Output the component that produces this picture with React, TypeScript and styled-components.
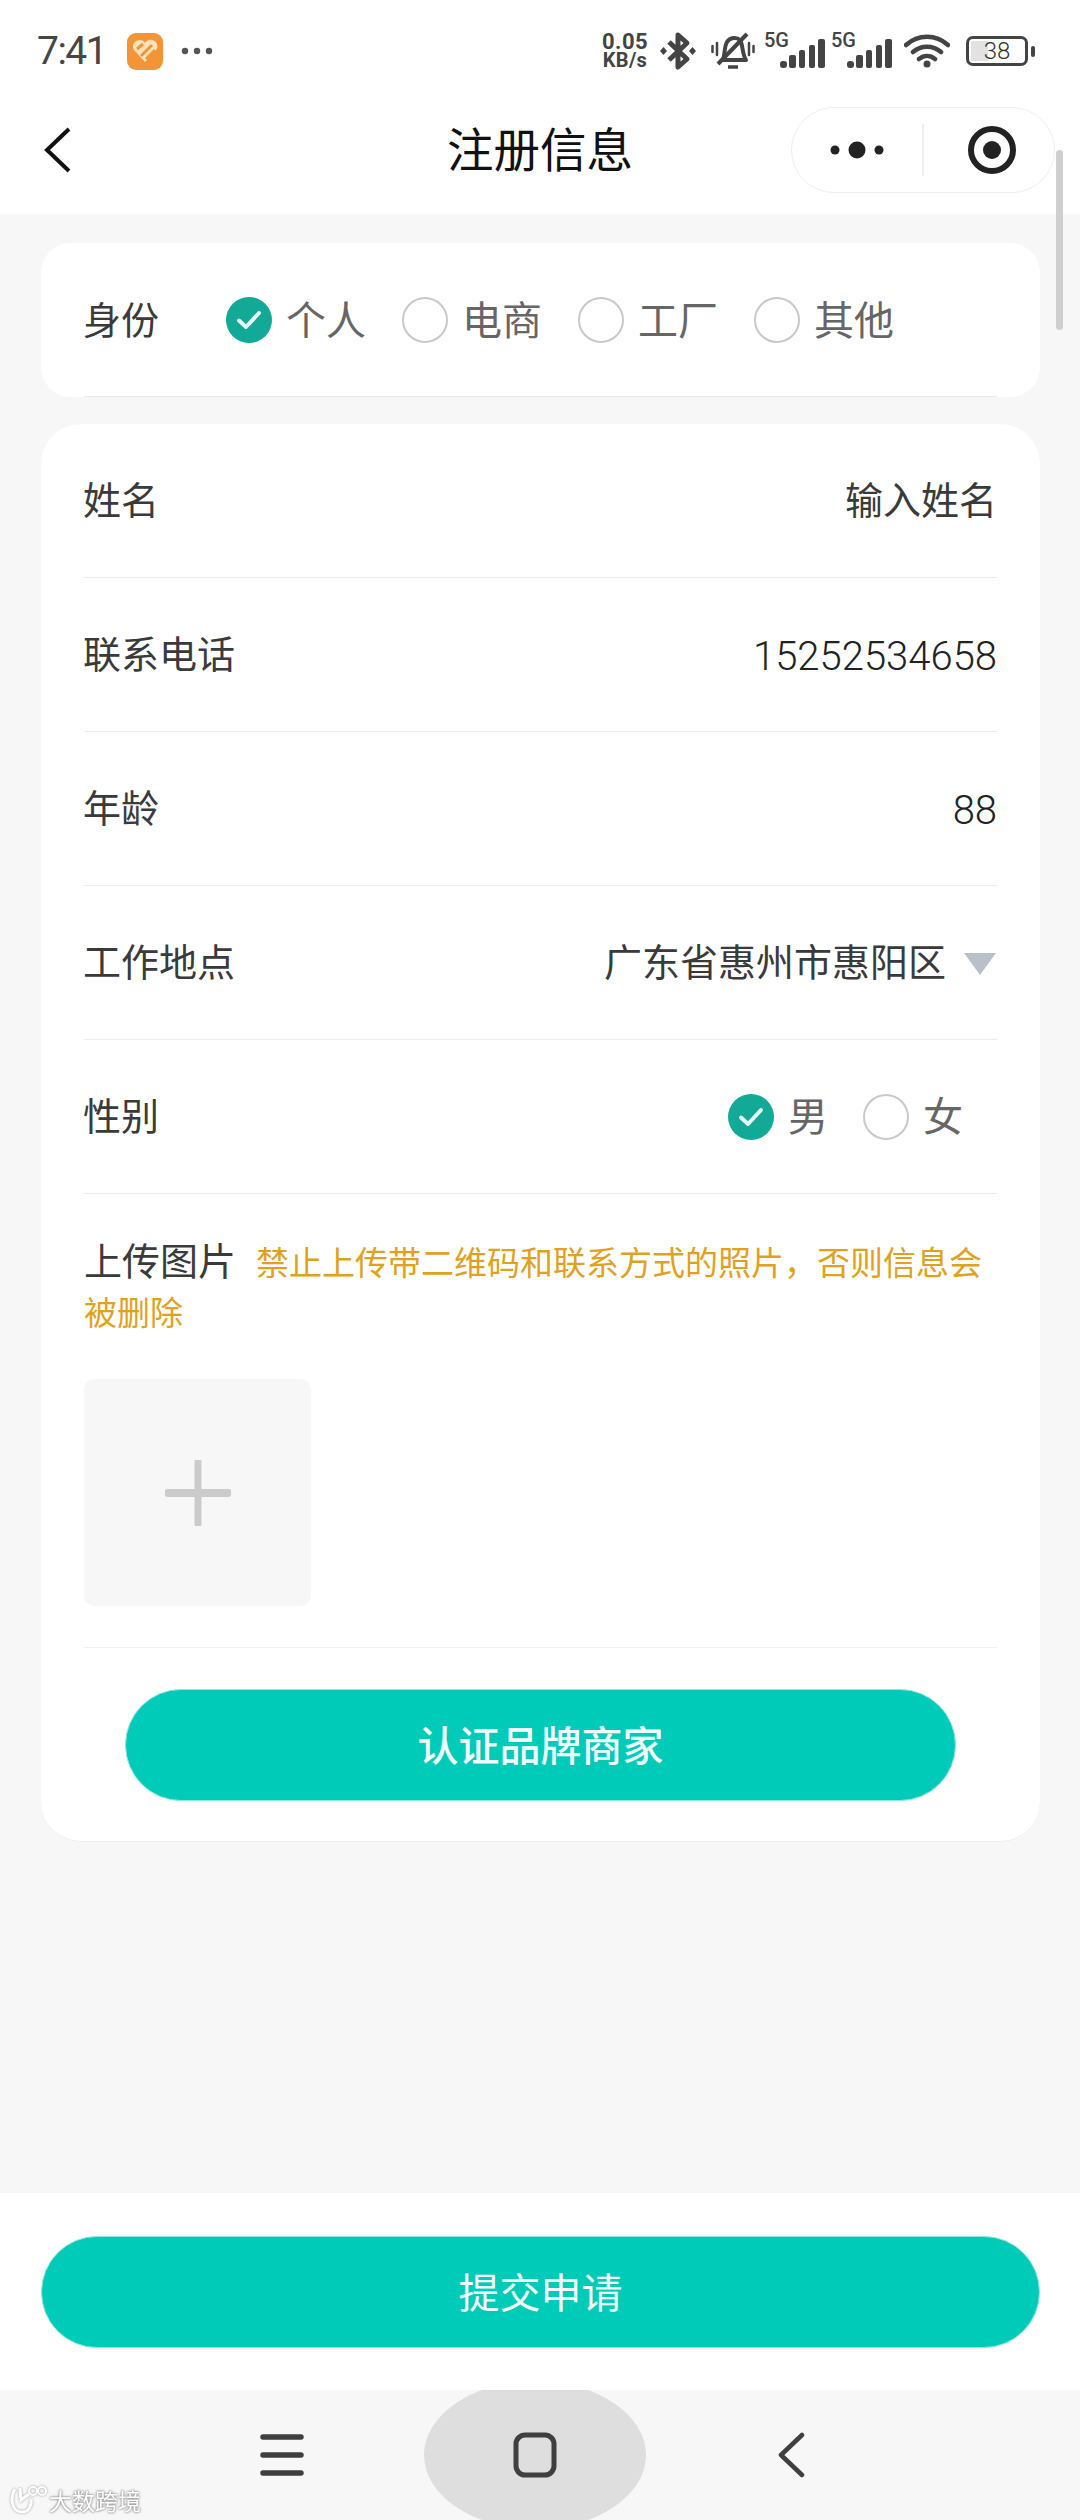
import styled, { createGlobalStyle } from "styled-components";

const GlobalStyle = createGlobalStyle`
    html, body {
        margin: 0;
        padding: 0;
        background: #f7f7f7;
    }
    * {
        box-sizing: border-box;
    }
`

const identities = [
    { label: "个人", checked: true },
    { label: "电商", checked: false },
    { label: "工厂", checked: false },
    { label: "其他", checked: false },
];

const RadioOption = ({ label, checked }: { label: string; checked: boolean }) => (
    <Option>
        <RadioCircle $checked={checked}>
            {checked && (
                <svg width="28" height="22" viewBox="0 0 28 22">
                    <path d="M4 11.5 L11 18 L24 4" fill="none" stroke="#e6fbf8" strokeWidth="4" strokeLinecap="round" strokeLinejoin="round" />
                </svg>
            )}
        </RadioCircle>
        <OptionText>{label}</OptionText>
    </Option>
);

const Signal = () => (
    <SignalWrap>
        <SignalLabel>5G</SignalLabel>
        <svg width="45" height="29" viewBox="0 0 45 29">
            <rect x="0" y="22" width="7" height="7" rx="3" fill="#444" />
            <rect x="9" y="16" width="7" height="13" rx="2" fill="#444" />
            <rect x="19" y="11" width="6" height="18" rx="2" fill="#444" />
            <rect x="29" y="6" width="6" height="23" rx="2" fill="#444" />
            <rect x="38" y="0" width="7" height="29" rx="2" fill="#444" />
        </svg>
    </SignalWrap>
);

const App = () => {
    return (
        <>
            <GlobalStyle />
            <Screen>
                <ScrollThumb />
                <StatusBar>
                    <StatusLeft>
                        <Time>7:41</Time>
                        <AppIcon>
                            <svg width="26" height="24" viewBox="0 0 26 24">
                                <path d="M13 23 L2 11 C-1 6 3 1 8 1 C10 1 12 2 13 4 C15 1 18 0 20 1 C25 2 27 7 24 11 Z" fill="#fde3bd" />
                                <path d="M5 10 L11 5 M9 17 L20 6 M14 20 L23 11" stroke="#f39536" strokeWidth="3" fill="none" />
                            </svg>
                        </AppIcon>
                        <MoreDots width="32" height="8" viewBox="0 0 32 8">
                            <circle cx="4" cy="4" r="3.2" fill="#555" />
                            <circle cx="16" cy="4" r="3.2" fill="#555" />
                            <circle cx="28" cy="4" r="3.2" fill="#555" />
                        </MoreDots>
                    </StatusLeft>
                    <StatusRight>
                        <Speed>
                            <span>0.05</span>
                            <span>KB/s</span>
                        </Speed>
                        <StatusItem $left={12}>
                            <svg width="36" height="40" viewBox="0 0 36 40">
                                <path d="M9 11 L27 28 L18 36 L18 4 L27 12 L9 29" fill="none" stroke="#444" strokeWidth="5" strokeLinejoin="round" />
                                <path d="M3.5 16 L7 20 L3.5 24 L0 20 Z M32.5 16 L36 20 L32.5 24 L29 20 Z" fill="#444" />
                            </svg>
                        </StatusItem>
                        <StatusItem $left={15}>
                            <svg width="44" height="38" viewBox="0 0 44 38">
                                <path d="M12 28 C14 23 13 15 16 10 C19 5 26 5 29 8 C32 12 31 22 35 28 Z" fill="none" stroke="#444" strokeWidth="4" strokeLinejoin="round" />
                                <path d="M7 32 L36 2" stroke="#444" strokeWidth="4" />
                                <path d="M17 35 H27" stroke="#444" strokeWidth="3.5" />
                                <path d="M1.5 14 V20 M6 11 V23 M38 11 V23 M42.5 14 V20" stroke="#444" strokeWidth="2.5" strokeLinecap="round" />
                            </svg>
                        </StatusItem>
                        <StatusItem $left={9}>
                            <Signal />
                        </StatusItem>
                        <StatusItem $left={6}>
                            <Signal />
                        </StatusItem>
                        <StatusItem $left={12}>
                            <svg width="46" height="34" viewBox="0 0 46 34">
                                <path d="M2 11 C14 0 32 0 44 11 M9 18 C17 11 29 11 37 18 M15 25 C20 21 26 21 31 25" fill="none" stroke="#444" strokeWidth="4.5" strokeLinecap="round" />
                                <circle cx="23" cy="30" r="3.5" fill="#444" />
                            </svg>
                        </StatusItem>
                        <StatusItem $left={16}>
                            <Battery>
                                <BatteryBody>
                                    <BatteryFill style={{ width: "30%" }} />
                                    <BatteryText>38</BatteryText>
                                </BatteryBody>
                                <BatteryTip />
                            </Battery>
                        </StatusItem>
                    </StatusRight>
                </StatusBar>

                <NavBar>
                    <BackButton>
                        <svg width="30" height="48" viewBox="0 0 30 48">
                            <path d="M26 3 L4 24 L26 45" fill="none" stroke="#111" strokeWidth="4" />
                        </svg>
                    </BackButton>
                    <NavTitle>注册信息</NavTitle>
                    <Capsule>
                        <CapsuleSide>
                            <svg width="54" height="20" viewBox="0 0 54 20">
                                <circle cx="5" cy="10" r="4.5" fill="#222" />
                                <circle cx="27" cy="10" r="8.5" fill="#222" />
                                <circle cx="49" cy="10" r="4.5" fill="#222" />
                            </svg>
                        </CapsuleSide>
                        <CapsuleLine />
                        <CapsuleSide $shift={6}>
                            <svg width="50" height="50" viewBox="0 0 50 50">
                                <circle cx="25" cy="25" r="21" fill="none" stroke="#222" strokeWidth="6" />
                                <circle cx="25" cy="25" r="9" fill="#222" />
                            </svg>
                        </CapsuleSide>
                    </Capsule>
                </NavBar>

                <Content>
                    <IdentityCard>
                        <RowLabel>身份</RowLabel>
                        <IdentityOptions>
                            {identities.map((item) => (
                                <RadioOption key={item.label} label={item.label} checked={item.checked} />
                            ))}
                        </IdentityOptions>
                    </IdentityCard>

                    <FormCard>
                        <FormRow>
                            <RowLabel>姓名</RowLabel>
                            <RowValue>输入姓名</RowValue>
                        </FormRow>
                        <FormRow>
                            <RowLabel>联系电话</RowLabel>
                            <RowValue $digits>15252534658</RowValue>
                        </FormRow>
                        <FormRow>
                            <RowLabel>年龄</RowLabel>
                            <RowValue $digits>88</RowValue>
                        </FormRow>
                        <FormRow>
                            <RowLabel>工作地点</RowLabel>
                            <LocationValue>
                                <RowValue>广东省惠州市惠阳区</RowValue>
                                <svg width="34" height="24" viewBox="0 0 34 24">
                                    <path d="M1 1 H33 L17 23 Z" fill="#b9c0c7" />
                                </svg>
                            </LocationValue>
                        </FormRow>
                        <FormRow>
                            <RowLabel>性别</RowLabel>
                            <GenderOptions>
                                <RadioOption label="男" checked />
                                <RadioOption label="女" checked={false} />
                            </GenderOptions>
                        </FormRow>
                        <UploadRow>
                            <UploadText>
                                <UploadLabel>上传图片</UploadLabel>
                                <UploadWarning>禁止上传带二维码和联系方式的照片，否则信息会被删除</UploadWarning>
                            </UploadText>
                            <UploadTile>
                                <svg width="66" height="66" viewBox="0 0 66 66">
                                    <path d="M33 2 V64" stroke="#cbcbcb" strokeWidth="7" strokeLinecap="round" />
                                    <path d="M3 33 H63" stroke="#cbcbcb" strokeWidth="8" strokeLinecap="round" />
                                </svg>
                            </UploadTile>
                        </UploadRow>
                        <BrandButton>认证品牌商家</BrandButton>
                    </FormCard>
                </Content>

                <SubmitBar>
                    <SubmitButton>提交申请</SubmitButton>
                </SubmitBar>

                <SystemNav>
                    <svg width="44" height="44" viewBox="0 0 44 44">
                        <path d="M3 4 H41 M3 22 H41 M3 40 H41" stroke="#3f3f3f" strokeWidth="5.5" strokeLinecap="round" />
                    </svg>
                    <HomePill>
                        <svg width="44" height="46" viewBox="0 0 44 46">
                            <rect x="3" y="3" width="38" height="40" rx="9" fill="none" stroke="#3f3f3f" strokeWidth="5" />
                        </svg>
                    </HomePill>
                    <svg width="30" height="46" viewBox="0 0 30 46">
                        <path d="M26 3 L5 23 L26 43" fill="none" stroke="#3f3f3f" strokeWidth="4.5" strokeLinecap="round" strokeLinejoin="round" />
                    </svg>
                    <Watermark>
                        <svg width="38" height="30" viewBox="0 0 38 30">
                            <path d="M6 4 C1 12 2 27 13 27 C20 27 23 20 22 14 M11 3 L12 15 L20 9" fill="none" stroke="#fff" strokeWidth="3" />
                            <circle cx="24" cy="6" r="4" fill="none" stroke="#fff" strokeWidth="2" />
                            <circle cx="33" cy="6" r="4" fill="none" stroke="#fff" strokeWidth="2" />
                        </svg>
                        <span>大数跨境</span>
                    </Watermark>
                </SystemNav>
            </Screen>
        </>
    );
}

export default App;

const cjkFont = `"Noto Sans CJK SC", "Noto Sans", sans-serif`;

const Screen = styled.div`
    position: relative;
    width: 1080px;
    height: 2520px;
    display: flex;
    flex-direction: column;
    overflow: hidden;
    background: #f7f7f7;
    font-family: ${cjkFont};
`

const ScrollThumb = styled.div`
    position: absolute;
    left: 1056px;
    top: 150px;
    width: 7px;
    height: 180px;
    border-radius: 4px;
    background: #cfcfcf;
    z-index: 2;
`

const StatusBar = styled.div`
    height: 106px;
    flex-shrink: 0;
    display: flex;
    justify-content: space-between;
    align-items: center;
    padding: 0 45px 4px 37px;
    background: #fff;
`

const StatusLeft = styled.div`
    display: flex;
    align-items: center;
`

const Time = styled.span`
    font-family: "Roboto", sans-serif;
    font-size: 39px;
    letter-spacing: -1.5px;
    color: #464646;
    line-height: 1;
`

const AppIcon = styled.div`
    width: 36px;
    height: 37px;
    margin-left: 21px;
    border-radius: 9px;
    background: #f39536;
    display: flex;
    align-items: center;
    justify-content: center;
`

const MoreDots = styled.svg`
    margin-left: 18px;
`

const StatusRight = styled.div`
    display: flex;
    align-items: center;
`

const StatusItem = styled.div<{ $left: number }>`
    display: flex;
    margin-left: ${(props) => props.$left}px;
`

const Speed = styled.div`
    width: 46px;
    display: flex;
    flex-direction: column;
    align-items: center;
    font-family: "Roboto", sans-serif;
    font-weight: 700;
    color: #444;
    line-height: 19px;
    white-space: nowrap;

    span:first-child {
        font-size: 22px;
        letter-spacing: 0.5px;
    }
    span:last-child {
        font-size: 20px;
        letter-spacing: 0.3px;
    }
`

const SignalWrap = styled.div`
    width: 61px;
    height: 34px;
    position: relative;
    display: flex;
    justify-content: flex-end;
    align-items: flex-end;
`

const SignalLabel = styled.span`
    position: absolute;
    left: 0;
    top: -6px;
    font-family: "Roboto", sans-serif;
    font-weight: 500;
    font-size: 20px;
    line-height: 24px;
    color: #444;
`

const Battery = styled.div`
    display: flex;
    align-items: center;
    gap: 3px;
`

const BatteryBody = styled.div`
    position: relative;
    width: 62px;
    height: 30px;
    border: 3px solid #444;
    border-radius: 7px;
    overflow: hidden;
    display: flex;
    align-items: center;
    justify-content: center;
`

const BatteryFill = styled.div`
    position: absolute;
    left: 2px;
    top: 2px;
    bottom: 2px;
    background: #e2e2e2;
`

const BatteryText = styled.span`
    position: relative;
    font-family: "Roboto", sans-serif;
    font-weight: 300;
    font-size: 24px;
    color: #333;
    line-height: 1;
`

const BatteryTip = styled.div`
    width: 4px;
    height: 11px;
    border-radius: 2px;
    background: #444;
`

const NavBar = styled.div`
    position: relative;
    height: 108px;
    flex-shrink: 0;
    display: flex;
    align-items: center;
    justify-content: center;
    background: #fff;
`

const BackButton = styled.div`
    position: absolute;
    left: 43px;
    top: 20px;
    display: flex;
`

const NavTitle = styled.div`
    font-size: 46.5px;
    color: #111;
    line-height: 1;
    margin-top: -26px;
    font-weight: 400;
`

const Capsule = styled.div`
    position: absolute;
    left: 791px;
    top: 1px;
    width: 264px;
    height: 86px;
    border: 1.5px solid #eeeeee;
    border-radius: 43px;
    display: flex;
    align-items: center;
    background: #fff;
`

const CapsuleSide = styled.div<{ $shift?: number }>`
    width: 130px;
    flex: none;
    display: flex;
    justify-content: center;
    align-items: center;
    padding-left: ${(props) => props.$shift || 0}px;
`

const CapsuleLine = styled.div`
    width: 1.5px;
    height: 52px;
    background: #eeeeee;
`

const Content = styled.div`
    flex: 1;
    padding: 29px 40px 0 41px;
    display: flex;
    flex-direction: column;
    gap: 27px;
`

const IdentityCard = styled.div`
    position: relative;
    height: 154px;
    padding: 0 43px;
    display: flex;
    align-items: center;
    background: #fff;
    border-radius: 30px;

    &::after {
        content: "";
        position: absolute;
        left: 43px;
        right: 43px;
        bottom: 0;
        height: 1.5px;
        background: #e8e8e8;
    }
`

const RowLabel = styled.span`
    font-size: 38px;
    color: #3a3a3a;
    line-height: 1;
    margin: 0 0 5px -1px;
`

const IdentityOptions = styled.div`
    display: flex;
    gap: 36px;
    margin-left: 67px;
`

const Option = styled.div`
    display: flex;
    align-items: center;
    gap: 14px;
`

const RadioCircle = styled.div<{ $checked: boolean }>`
    width: 46px;
    height: 46px;
    border-radius: 50%;
    display: flex;
    align-items: center;
    justify-content: center;
    background: ${(props) => (props.$checked ? "#12a997" : "#fff")};
    border: ${(props) => (props.$checked ? "none" : "2px solid #c9c9c9")};
`

const OptionText = styled.span`
    font-size: 40px;
    color: #666;
    line-height: 1;
    margin-bottom: 5px;
`

const FormCard = styled.div`
    padding: 0 43px;
    height: 1418px;
    background: #fff;
    border-radius: 40px;
    display: flex;
    flex-direction: column;
    border-bottom: 1.5px solid #efefef;
`

const FormRow = styled.div`
    height: 154px;
    flex-shrink: 0;
    display: flex;
    justify-content: space-between;
    align-items: center;
    border-bottom: 1.5px solid #ececec;
`

const RowValue = styled.span<{ $digits?: boolean }>`
    font-family: ${(props) => (props.$digits ? `"Roboto", sans-serif` : cjkFont)};
    font-size: ${(props) => (props.$digits ? "40px" : "38px")};
    font-weight: ${(props) => (props.$digits ? 300 : 400)};
    letter-spacing: 0;
    color: ${(props) => (props.$digits ? "#222" : "#3a3a3a")};
    line-height: 1;
    margin: ${(props) => (props.$digits ? "5px 0 0" : "0 0 5px")};
`

const LocationValue = styled.div`
    display: flex;
    align-items: center;
    gap: 17px;

    svg {
        margin-top: 2px;
    }
`

const GenderOptions = styled.div`
    display: flex;
    gap: 35px;
    padding-right: 34px;
`

const UploadRow = styled.div`
    height: 454px;
    flex-shrink: 0;
    padding-top: 42px;
    display: flex;
    flex-direction: column;
    border-bottom: 1.5px solid #f0f0f0;
`

const UploadText = styled.div`
    height: 143px;
    font-size: 33px;
    line-height: 50px;
`

const UploadLabel = styled.span`
    font-size: 38px;
    line-height: 1;
    color: #3a3a3a;
    margin-right: 20px;
`

const UploadWarning = styled.span`
    font-size: 33px;
    color: #e0a11e;
`

const UploadTile = styled.div`
    width: 227px;
    height: 227px;
    border-radius: 10px;
    background: #f7f7f7;
    display: flex;
    align-items: center;
    justify-content: center;
`

const BrandButton = styled.div`
    margin: 41px 41px 0;
    height: 112px;
    flex-shrink: 0;
    border-radius: 56px;
    background: #00cbb8;
    border: 1.5px solid #8fe9dd;
    color: #f2fbfa;
    font-size: 41px;
    font-weight: 500;
    display: flex;
    align-items: center;
    justify-content: center;
    padding-bottom: 5px;
`

const SubmitBar = styled.div`
    height: 197px;
    flex-shrink: 0;
    padding: 43px 40px 0 41px;
    background: #fff;
`

const SubmitButton = styled.div`
    height: 112px;
    border-radius: 56px;
    background: #00cbb8;
    border: 1.5px solid #8fe9dd;
    color: #f2fbfa;
    font-size: 41px;
    display: flex;
    align-items: center;
    justify-content: center;
    padding-bottom: 5px;
`

const SystemNav = styled.div`
    position: relative;
    height: 130px;
    flex-shrink: 0;
    padding-left: 260px;
    display: flex;
    align-items: center;
    overflow: hidden;
    background: #f7f7f7;

    & > svg:last-of-type {
        margin-left: 130px;
    }
`

const HomePill = styled.div`
    width: 222px;
    height: 148px;
    flex-shrink: 0;
    margin-left: 120px;
    border-radius: 50%;
    background: #dedede;
    display: flex;
    align-items: center;
    justify-content: center;
`

const Watermark = styled.div`
    position: absolute;
    left: 9px;
    bottom: 5px;
    display: flex;
    align-items: center;
    gap: 2px;
    color: #fff;
    font-size: 23px;
    line-height: 1;
    text-shadow: 0 0 2px #9a9a9a;
    filter: drop-shadow(0 0 1px #999);
`
